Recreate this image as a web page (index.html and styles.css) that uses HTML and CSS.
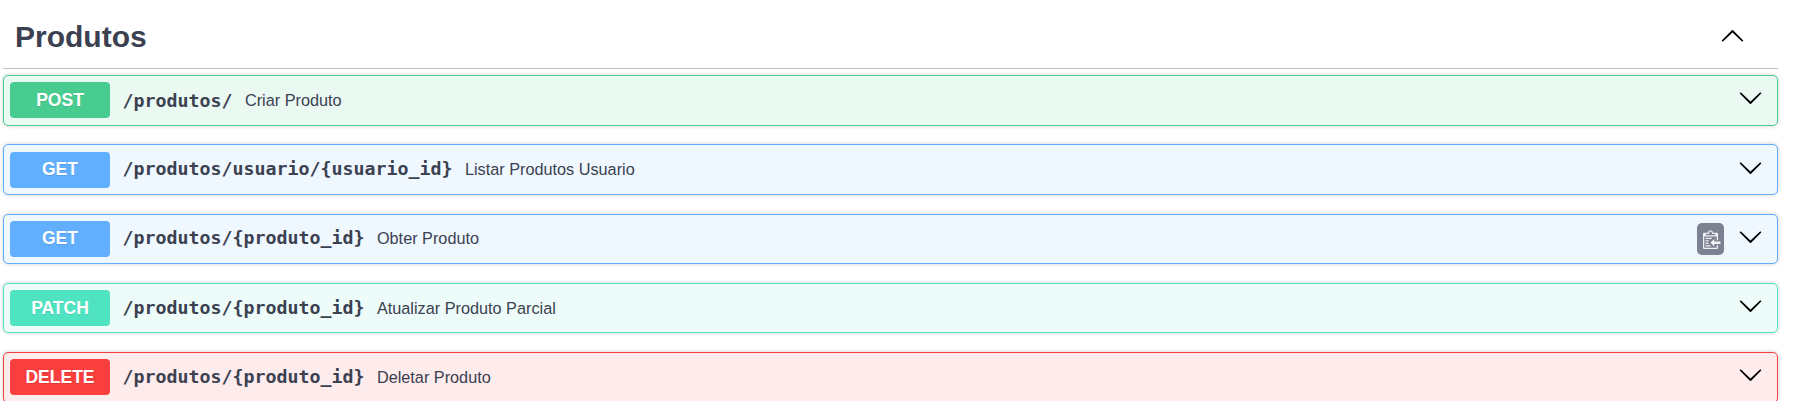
FILE: index.html
```html
<!DOCTYPE html>
<html lang="pt">
<head>
<meta charset="utf-8">
<title>Produtos</title>
<link rel="stylesheet" href="styles.css">
</head>
<body>
<svg width="0" height="0" class="defs">
  <symbol id="down" viewBox="0 0 20 20"><path d="M17.418 6.109c.272-.268.709-.268.979 0s.271.701 0 .969l-7.908 7.83c-.27.268-.707.268-.979 0l-7.908-7.83c-.27-.268-.27-.701 0-.969.271-.268.709-.268.979 0L10 13.25l7.418-7.141z"/></symbol>
</svg>
<main class="section">
  <header class="tag">
    <h3 class="tag-title">Produtos</h3>
    <svg class="arrow up"><use href="#down"/></svg>
  </header>
  <div class="block post">
    <span class="method">POST</span><span class="path">/produtos/</span><span class="desc">Criar Produto</span>
    <svg class="arrow"><use href="#down"/></svg>
  </div>
  <div class="block get">
    <span class="method">GET</span><span class="path">/produtos/usuario/{usuario_id}</span><span class="desc">Listar Produtos Usuario</span>
    <svg class="arrow"><use href="#down"/></svg>
  </div>
  <div class="block get">
    <span class="method">GET</span><span class="path">/produtos/{produto_id}</span><span class="desc">Obter Produto</span>
    <span class="copy"><svg viewBox="0 0 15 16" width="18.75" height="20"><path d="M2 13h4v1H2v-1zm5-6H2v1h5V7zm2 3V8l-3 3 3 3v-2h5v-2H9zM4.5 9H2v1h2.5V9zM2 12h2.5v-1H2v1zm9 1h1v2c-.02.28-.11.52-.3.7-.19.18-.42.28-.7.3H1c-.55 0-1-.45-1-1V4c0-.55.45-1 1-1h3c0-1.11.89-2 2-2 1.11 0 2 .89 2 2h3c.55 0 1 .45 1 1v5h-1V6H1v9h10v-2zM2 5h8c0-.55-.45-1-1-1H8c-.55 0-1-.45-1-1s-.45-1-1-1-1 .45-1 1-.45 1-1 1H3c-.55 0-1 .45-1 1z"/></svg></span>
    <svg class="arrow"><use href="#down"/></svg>
  </div>
  <div class="block patch">
    <span class="method">PATCH</span><span class="path">/produtos/{produto_id}</span><span class="desc">Atualizar Produto Parcial</span>
    <svg class="arrow"><use href="#down"/></svg>
  </div>
  <div class="block delete">
    <span class="method">DELETE</span><span class="path">/produtos/{produto_id}</span><span class="desc">Deletar Produto</span>
    <svg class="arrow"><use href="#down"/></svg>
  </div>
</main>
</body>
</html>
```
FILE: styles.css
```css
* { box-sizing: border-box; }
body {
  margin: 0;
  background: #fff;
  color: #3b4151;
  font-family: "Liberation Sans", Arial, sans-serif;
}
.defs { display: none; }
.section { height: 401px; padding: 0 26px 0 3px; overflow: hidden; }
.tag {
  display: flex;
  align-items: center;
  height: 69px;
  margin-bottom: 6px;
  padding: 5px 33.5px 0 12px;
  border-bottom: 1px solid rgba(59, 65, 81, .35);
}
.tag-title { flex: 1; margin: 0; font-size: 30px; line-height: 36px; }
.arrow { flex: none; width: 25px; height: 25px; margin-bottom: 5px; }
.up { transform: rotate(180deg); margin-bottom: 1px; }
.block {
  display: flex;
  align-items: center;
  height: 50.6px;
  margin-bottom: 18.7px;
  padding: 0 14.5px 0 6px;
  border: 1px solid;
  border-radius: 5px;
  box-shadow: 0 0 4px rgba(0, 0, 0, .19);
}
.method {
  width: 100px;
  height: 36px;
  margin-right: 12.5px;
  border-radius: 4px;
  color: #fff;
  font-size: 17.5px;
  font-weight: 700;
  line-height: 36px;
  text-align: center;
  text-shadow: 0 1px 0 rgba(0, 0, 0, .1);
}
.path {
  margin-right: 12.5px;
  font: 700 18.27px/24px "DejaVu Sans Mono", monospace;
}
.desc { flex: 1; font-size: 16.25px; line-height: 20px; }
.post .path { padding-top: 1.4px; }
.get .method { line-height: 34.6px; }
.get .path, .get .desc, .delete .path, .delete .desc { padding-bottom: 1.4px; }
.copy {
  display: flex;
  justify-content: center;
  align-items: center;
  width: 27px;
  height: 32px;
  margin-right: 13.5px;
  padding: 0 0 0 3px;
  border-radius: 5px;
  background: #7d8293;
  fill: #fff;
}
.copy svg { flex: none; opacity: .9; }
.post { border-color: #49cc90; background: #ebf9f3; }
.post .method { background: #49cc90; }
.get { border-color: #61affe; background: #eff7ff; }
.get .method { background: #61affe; }
.patch { border-color: #50e3c2; background: #edfcf9; }
.patch .method { background: #50e3c2; }
.delete { border-color: #f93e3e; background: #feebeb; }
.delete .method { background: #f93e3e; }
```
